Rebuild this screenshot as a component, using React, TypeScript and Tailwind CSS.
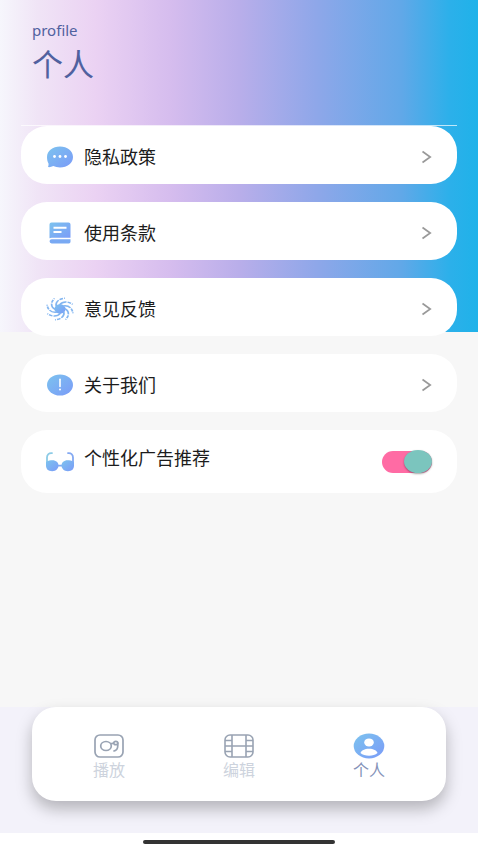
import { useState, type ReactNode } from "react";

function BlueGradient({ id }: { id: string }) {
  return (
    <defs>
      <linearGradient id={id} x1="0" y1="0" x2="1" y2="1">
        <stop offset="0" stopColor="#7cc3ee" />
        <stop offset="1" stopColor="#7b9bf8" />
      </linearGradient>
    </defs>
  );
}

function ChatIcon() {
  return (
    <svg viewBox="0 0 28 24" className="h-6 w-7" aria-hidden="true">
      <BlueGradient id="chat" />
      <path
        d="M14 1.500c7.300 0 13 4.600 13 10.500s-5.700 10.500-13 10.500c-2.500 0-4.800-.5-6.700-1.400-1.700.9-3.500 1.200-5.300 1 .4-1 .7-2.200.5-3.600C1.400 16.600 1 14.400 1 12 1 6.100 6.700 1.500 14 1.500z"
        fill="url(#chat)"
      />
      <g fill="#fff">
        <circle cx="8.500" cy="11.500" r="1.400" />
        <circle cx="14" cy="11.500" r="1.400" />
        <circle cx="19.500" cy="11.500" r="1.400" />
      </g>
    </svg>
  );
}

function TermsIcon() {
  return (
    <svg viewBox="0 0 28 24" className="h-6 w-7" aria-hidden="true">
      <BlueGradient id="terms" />
      <path
        d="M5.500 1.500h17a2 2 0 0 1 2 2v13.200H5.800c-.9 0-1.600.2-2.300.6V3.500a2 2 0 0 1 2-2z"
        fill="url(#terms)"
      />
      <path
        d="M5.800 18.200h18.700v2.600a1.700 1.700 0 0 1-1.700 1.700H5.700a2.150 2.150 0 0 1 0-4.300z"
        fill="#79a9f3"
      />
      <path d="M7.500 6.700h13M7.500 11h8" stroke="#fff" strokeWidth="1.900" />
    </svg>
  );
}

const swirlAngles = [0, 45, 90, 135, 180, 225, 270, 315];

function SwirlIcon() {
  return (
    <svg viewBox="0 0 28 24" className="h-6 w-7 overflow-visible" aria-hidden="true">
      <BlueGradient id="swirl" />
      <g transform="translate(14 12) scale(1.25 1.05)">
        <circle r="4.500" fill="url(#swirl)" />
        {swirlAngles.map((angle) => (
          <path
            key={angle}
            transform={`rotate(${angle})`}
            d="M-3-2.500C-3.800-6.500-1.200-9.800 4-10.300"
            fill="none"
            stroke="#82b5f0"
            strokeWidth="1.400"
            strokeDasharray="6.500 0.900 3 0.900"
          />
        ))}
      </g>
    </svg>
  );
}

function AboutIcon() {
  return (
    <svg viewBox="0 0 28 24" className="h-6 w-7" aria-hidden="true">
      <BlueGradient id="about" />
      <ellipse cx="14" cy="12" rx="13" ry="10.500" fill="url(#about)" />
      <path d="M14 6.300v7.200" stroke="#fff" strokeWidth="1.600" strokeLinecap="round" />
      <circle cx="14" cy="16.500" r="1" fill="#fff" />
    </svg>
  );
}

function GlassesIcon() {
  return (
    <svg viewBox="0 0 28 24" className="h-6 w-7 overflow-visible" aria-hidden="true">
      <BlueGradient id="glasses" />
      <g fill="none" strokeWidth="1.800" strokeLinecap="round">
        <path d="M1 14V7.500c0-3 2-4.700 5-4.300" stroke="#8ccbe6" />
        <path d="M27 14V7.500c0-3-2-4.700-5-4.300" stroke="#84a9f2" />
        <path d="M11 15.600h6" stroke="#80aaf2" />
      </g>
      <path
        d="M0 12c2.500-1.600 4.500-1.800 6.500-1.800 3.500 0 6 2.300 6 5.300s-2.500 5.700-6.300 5.700C2 21.200 0 19 0 15.500z"
        fill="url(#glasses)"
      />
      <path
        d="M28 12c-2.500-1.600-4.500-1.800-6.500-1.800-3.500 0-6 2.300-6 5.300s2.500 5.700 6.300 5.700c4.200 0 6.200-2.200 6.200-5.700z"
        fill="url(#glasses)"
      />
    </svg>
  );
}

function Chevron() {
  return (
    <svg viewBox="0 0 10 14" className="ml-auto h-3.5 w-2.5" aria-hidden="true">
      <path d="M0.500 1.500L8.200 7 0.500 12.500" fill="none" stroke="#999" strokeWidth="1.700" />
    </svg>
  );
}

function PlayTabIcon() {
  return (
    <svg viewBox="0 0 30 24" className="h-6 w-[30px]" fill="none" stroke="#99a3b3" strokeWidth="1.700" aria-hidden="true">
      <rect x="1" y="1" width="28" height="22" rx="5" />
      <ellipse cx="12" cy="12" rx="5.300" ry="4.500" />
      <ellipse cx="21.800" cy="9" rx="2" ry="1.700" />
      <path d="M23.800 8.500v3c0 3-1.400 5.300-4.400 5.700M16.500 9.500c1.200.2 2.300.1 3.300-.5" />
    </svg>
  );
}

function FilmTabIcon() {
  return (
    <svg viewBox="0 0 30 24" className="h-6 w-[30px]" fill="none" stroke="#99a3b3" strokeWidth="1.600" aria-hidden="true">
      <rect x="1" y="1" width="28" height="22" rx="5" />
      <path d="M8 1v22M22 1v22M1 12h28M1 6.500h7M1 17.500h7M22 6.500h7M22 17.500h7" />
    </svg>
  );
}

function PersonTabIcon() {
  return (
    <svg viewBox="0 0 30 24" className="h-6 w-[30px] overflow-visible" aria-hidden="true">
      <BlueGradient id="person" />
      <ellipse cx="15" cy="12" rx="15.300" ry="12.500" fill="url(#person)" />
      <ellipse cx="15" cy="8.400" rx="4.800" ry="4" fill="#fff" />
      <path d="M6.500 19c.8-2.600 4-4.200 8.500-4.200s7.700 1.600 8.500 4.200c-2 1.800-5 2.700-8.500 2.700s-6.500-.9-8.500-2.700z" fill="#fff" />
    </svg>
  );
}

const rows: { label: string; icon: ReactNode }[] = [
  { label: "隐私政策", icon: <ChatIcon /> },
  { label: "使用条款", icon: <TermsIcon /> },
  { label: "意见反馈", icon: <SwirlIcon /> },
  { label: "关于我们", icon: <AboutIcon /> },
];

const tabs: { label: string; icon: ReactNode; color: string }[] = [
  { label: "播放", icon: <PlayTabIcon />, color: "text-[#cdd3dd]" },
  { label: "编辑", icon: <FilmTabIcon />, color: "text-[#cdd3dd]" },
  { label: "个人", icon: <PersonTabIcon />, color: "text-[#8492b8]" },
];

export default function App() {
  const [personalized, setPersonalized] = useState(true);

  return (
    <div className="flex min-h-screen flex-col bg-white font-['Noto_Sans','Noto_Sans_CJK_SC',sans-serif]">
      <main className="flex-1 bg-[#f7f7f7] bg-[linear-gradient(90deg,#f6f6fc_0%,#f0e4f6_8%,#ebd2f3_20%,#d5bcee_36%,#b9aeea_50%,#8fa7e9_66%,#61a8e8_84%,#2cb0ea_94%,#1fb2e9_100%)] bg-[length:100%_332px] bg-no-repeat">
        <header className="flex h-[125px] flex-col px-8 pt-5 text-[#50619f]">
          <p className="text-[15px] leading-5">profile</p>
          <h1 className="mt-1 text-[31px] leading-10">个人</h1>
        </header>

        <div className="mx-[21px] flex flex-col gap-[18px] border-t border-white/70">
          {rows.map((row) => (
            <button
              key={row.label}
              type="button"
              className="flex h-[58px] w-full items-center gap-2.5 rounded-[26px] bg-white px-[25px] pt-1 text-left text-lg text-[#1c1c1c]"
            >
              {row.icon}
              <span>{row.label}</span>
              <Chevron />
            </button>
          ))}
          <div className="flex h-[63px] items-center gap-2.5 rounded-[26px] bg-white px-[25px] text-lg text-[#1c1c1c]">
            <GlassesIcon />
            <label htmlFor="personalized" className="pb-2">
              个性化广告推荐
            </label>
            <input
              id="personalized"
              type="checkbox"
              checked={personalized}
              onChange={(event) => setPersonalized(event.target.checked)}
              className="ml-auto flex h-[22px] w-[50px] cursor-pointer appearance-none items-center rounded-full bg-[#ff6ba4] before:h-[23px] before:w-7 before:rounded-[50%] before:bg-[#7bc5be] before:shadow-[0_1px_2px_rgba(0,0,0,0.35)] checked:justify-end"
            />
          </div>
        </div>
      </main>

      <div className="bg-[#f3f2fa] px-8 pb-8">
        <nav className="flex h-[94px] rounded-3xl bg-white px-3 pt-2 shadow-[0_8px_16px_rgba(0,0,0,0.26)]">
          {tabs.map((tab) => (
            <button
              key={tab.label}
              type="button"
              className={`flex flex-1 flex-col items-center justify-center text-base leading-6 ${tab.color}`}
            >
              {tab.icon}
              <span>{tab.label}</span>
            </button>
          ))}
        </nav>
      </div>

      <footer className="flex h-[17px] items-center justify-center">
        <div className="h-1 w-2/5 rounded-full bg-[#333]" />
      </footer>
    </div>
  );
}
